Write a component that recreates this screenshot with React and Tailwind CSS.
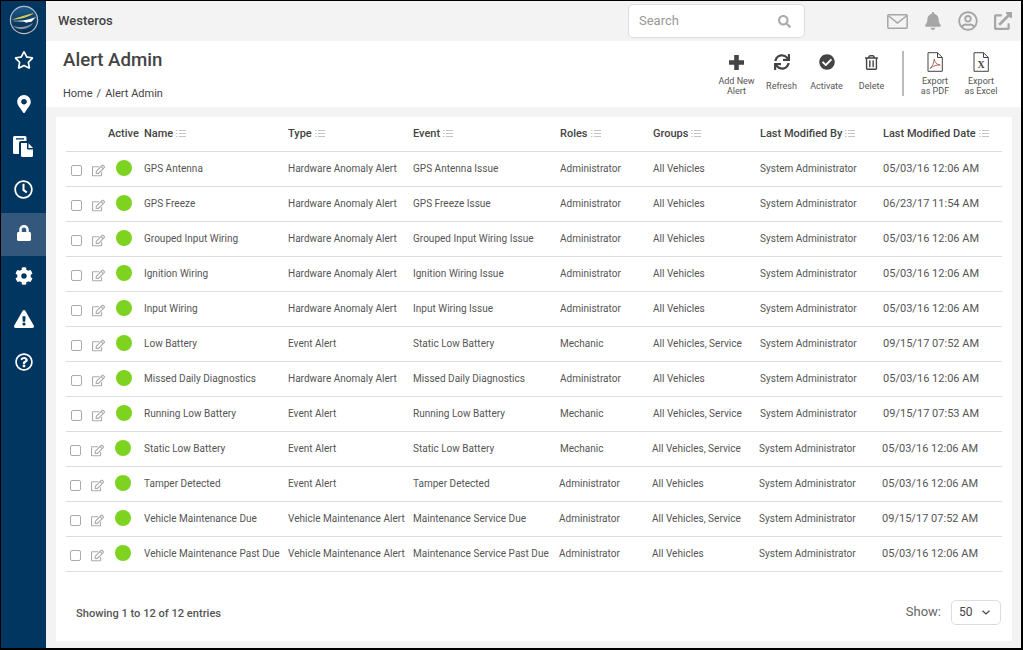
import { FaRegStar, FaMapMarkerAlt, FaRegClock, FaLock, FaCog, FaExclamationTriangle, FaRegQuestionCircle, FaSync, FaCheckCircle, FaRegTrashAlt, FaBell, FaRegUserCircle, FaExternalLinkAlt, FaRegEdit, FaSearch } from "react-icons/fa";

const rows = [
  ["GPS Antenna", "Hardware Anomaly Alert", "GPS Antenna Issue", "Administrator", "All Vehicles", "05/03/16 12:06 AM"],
  ["GPS Freeze", "Hardware Anomaly Alert", "GPS Freeze Issue", "Administrator", "All Vehicles", "06/23/17 11:54 AM"],
  ["Grouped Input Wiring", "Hardware Anomaly Alert", "Grouped Input Wiring Issue", "Administrator", "All Vehicles", "05/03/16 12:06 AM"],
  ["Ignition Wiring", "Hardware Anomaly Alert", "Ignition Wiring Issue", "Administrator", "All Vehicles", "05/03/16 12:06 AM"],
  ["Input Wiring", "Hardware Anomaly Alert", "Input Wiring Issue", "Administrator", "All Vehicles", "05/03/16 12:06 AM"],
  ["Low Battery", "Event Alert", "Static Low Battery", "Mechanic", "All Vehicles, Service", "09/15/17 07:52 AM"],
  ["Missed Daily Diagnostics", "Hardware Anomaly Alert", "Missed Daily Diagnostics", "Administrator", "All Vehicles", "05/03/16 12:06 AM"],
  ["Running Low Battery", "Event Alert", "Running Low Battery", "Mechanic", "All Vehicles, Service", "09/15/17 07:53 AM"],
  ["Static Low Battery", "Event Alert", "Static Low Battery", "Mechanic", "All Vehicles, Service", "05/03/16 12:06 AM"],
  ["Tamper Detected", "Event Alert", "Tamper Detected", "Administrator", "All Vehicles", "05/03/16 12:06 AM"],
  ["Vehicle Maintenance Due", "Vehicle Maintenance Alert", "Maintenance Service Due", "Administrator", "All Vehicles, Service", "09/15/17 07:52 AM"],
  ["Vehicle Maintenance Past Due", "Vehicle Maintenance Alert", "Maintenance Service Past Due", "Administrator", "All Vehicles", "05/03/16 12:06 AM"],
];

const columns = [
  ["Name", "w-[144px]"],
  ["Type", "w-[125px]"],
  ["Event", "w-[146px]"],
  ["Roles", "w-[93px] pl-px"],
  ["Groups", "w-[107px] pl-px"],
  ["Last Modified By", "w-[123px] pl-px"],
  ["Last Modified Date", "w-[120px] pl-px"],
];

function Logo() {
  return (
    <svg width="30" height="30" viewBox="0 0 30 30">
      <defs>
        <linearGradient id="sky" x1="0" y1="0" x2="0" y2="1">
          <stop offset="0" stopColor="#1d5c8c" />
          <stop offset="0.5" stopColor="#0f3f68" />
          <stop offset="1" stopColor="#0a2c4c" />
        </linearGradient>
      </defs>
      <circle cx="15" cy="15" r="13.6" fill="url(#sky)" stroke="#b4bfc8" strokeWidth="1.2" />
      <path d="M2 15 C9 12 17 10 25 8 C20 12 12 14 2 15Z" fill="#d9c95a" />
      <path d="M3 16 C11 16 17 15 21 14 L27 12 C25 14 24 15 22 17 C19 17 18 17 17 18 C17 16 12 17 3 16Z" fill="#ffffff" />
      <path d="M4 21 C11 23 18 22 24 18 C20 25 9 26 4 21Z" fill="#7e97ab" />
    </svg>
  );
}

function FilesIcon() {
  return (
    <svg width="21" height="21" viewBox="0 0 21 21" fill="#ffffff">
      <path d="M0 1.500A1.500 1.500 0 0 1 1.500 0H12a1.500 1.500 0 0 1 1.500 1.500V5H8A2 2 0 0 0 6 7v11H1.500A1.500 1.500 0 0 1 0 16.500Z" />
      <path d="M3 2.200h8v1.300H3Z" fill="#003660" />
      <path d="M8 7h6v5.500a1 1 0 0 0 1 1h5V19.500A1.500 1.500 0 0 1 18.500 21h-9A1.500 1.500 0 0 1 8 19.500Z" />
      <path d="M15.500 7.200 20 12h-4.500Z" />
    </svg>
  );
}

function MailIcon() {
  return (
    <svg width="21" height="15" viewBox="0 0 21 15" fill="none" stroke="#a6a6a6" strokeWidth="1.500">
      <rect x="0.800" y="0.800" width="19.400" height="13.400" rx="1" />
      <path d="M1 1.500 10.500 9 20 1.500" />
    </svg>
  );
}

function PlusIcon() {
  return (
    <svg width="15" height="15" viewBox="0 0 15 15" fill="#444">
      <path d="M5.200 0h4.600v5.200H15v4.600H9.800V15H5.200V9.800H0V5.200h5.200Z" />
    </svg>
  );
}

function DocIcon({ label }) {
  return (
    <svg width="16" height="20" viewBox="0 0 16 20" fill="none">
      <path d="M1 .7h9.500L15.300 5.500V19.300H1Z" stroke="#444" strokeWidth="1" />
      <path d="M10.500.7V5.500h4.800" stroke="#444" strokeWidth="1" />
      {label === "pdf" ? (
        <path d="M3 16.500C5 15 7 11 7.200 7c.6 3.500 2.500 5.500 6 6-3-.3-7 .7-10.200 3.500Z" stroke="#a85a50" strokeWidth="0.9" />
      ) : (
        <text x="8" y="16" textAnchor="middle" fontSize="10" fontWeight="700" fontFamily="Liberation Serif, serif" fill="#444">X</text>
      )}
    </svg>
  );
}

function ToolButton({ icon, lines, width }) {
  return (
    <div className={`flex flex-col items-center ${width}`}>
      <div className="h-[22px] flex items-center justify-center text-[#444]">{icon}</div>
      <div className="h-[24px] mt-[1px] flex items-center justify-center text-center text-[9px] leading-[10px] text-[#555]">
        {lines}
      </div>
    </div>
  );
}

function SortIcon() {
  return (
    <svg width="10" height="8" viewBox="0 0 10 8" className="inline-block ml-[3px]" stroke="#c4c4c4" strokeWidth="1">
      <path d="M0 .5h1.500M3 .5h7M0 3.500h1.500M3 3.500h7M0 6.500h1.500M3 6.500h7" />
    </svg>
  );
}

const navItems = [
  <FaRegStar size={20} className="-mt-px" />,
  <FaMapMarkerAlt size={18} />,
  <FilesIcon />,
  <FaRegClock size={19} />,
  <FaLock size={16} />,
  <FaCog size={18} />,
  <FaExclamationTriangle size={20} />,
  <FaRegQuestionCircle size={18} />,
];

export default function App() {
  return (
    <div className="w-[1023px] h-[650px] border-t border-l border-r-2 border-b-2 border-black flex overflow-hidden bg-[#f3f3f3] font-['Roboto',sans-serif] text-[#555]">
      <aside className="w-[45px] shrink-0 bg-[#003660] text-white">
        <div className="h-[40px] pb-[2px] flex items-center justify-center"><Logo /></div>
        {navItems.map((icon, i) => (
          <div key={i} className={`h-[43px] pb-[4px] flex items-center justify-center ${i === 4 ? "bg-[#33587b]" : ""}`}>
            {icon}
          </div>
        ))}
      </aside>

      <div className="flex-1 min-w-0 flex flex-col">
        <header className="h-[40px] shrink-0 flex items-center pl-[12px] pr-[9px] bg-[#f3f3f3]">
          <div className="text-[13px] font-medium text-[#444]">Westeros</div>
          <div className="ml-auto w-[177px] h-[34px] bg-white border border-[#ddd] rounded-[5px] flex items-center justify-between pl-[10px] pr-[13px] text-[13px] text-[#999]">
            <span>Search</span>
            <FaSearch size={13} className="text-[#aaa]" />
          </div>
          <div className="flex items-center text-[#a6a6a6] ml-[82px] gap-[16px]">
            <MailIcon />
            <FaBell size={18} />
            <FaRegUserCircle size={20} />
            <FaExternalLinkAlt size={18} />
          </div>
        </header>

        <div className="h-[66px] shrink-0 bg-white flex pl-[17px]">
          <div>
            <h1 className="text-[18.7px] leading-[24px] mt-[7px] font-medium text-[#444]">Alert Admin</h1>
            <div className="mt-[15px] flex gap-[4px] text-[11px] leading-[14px] text-[#444]">
              <span>Home</span>
              <span>/</span>
              <span>Alert Admin</span>
            </div>
          </div>
          <div className="ml-auto flex items-start pt-[10px] pr-[17px]">
            <ToolButton width="w-[45px]" icon={<PlusIcon />} lines={<span>Add New<br />Alert</span>} />
            <ToolButton width="w-[45px]" icon={<FaSync size={16} />} lines="Refresh" />
            <ToolButton width="w-[45px]" icon={<FaCheckCircle size={16} />} lines="Activate" />
            <ToolButton width="w-[45px]" icon={<FaRegTrashAlt size={15} />} lines="Delete" />
            <div className="w-[2px] h-[45px] bg-[#bbb] ml-[8px] mr-[8px]" />
            <ToolButton width="w-[46px]" icon={<DocIcon label="pdf" />} lines={<span>Export<br />as PDF</span>} />
            <ToolButton width="w-[46px]" icon={<DocIcon label="xls" />} lines={<span>Export<br />as Excel</span>} />
          </div>
        </div>

        <main className="flex-1 min-h-0 pt-[10px] pl-[10px] pr-[9px] pb-[7px]">
          <div className="h-full bg-white px-[10px]">
            <table className="w-[936px] table-fixed border-collapse">
              <thead>
                <tr className="h-[34px] border-b border-[#ddd] text-[11px] font-medium text-[#444]">
                  <th className="w-[42px] p-0" />
                  <th className="w-[36px] p-0 text-left font-medium">Active</th>
                  {columns.map(([name, width]) => (
                    <th key={name} className={`${width} pr-0 py-0 text-left font-medium whitespace-nowrap`}>
                      {name}<SortIcon />
                    </th>
                  ))}
                </tr>
              </thead>
              <tbody>
                {rows.map((row, i) => {
                  const lowRow = i >= 8;
                  const lastRows = i >= 9;
                  return (
                    <tr key={row[0]} className="h-[35px] border-b border-[#ddd] text-[10px] tracking-[0.02px] text-[#555]">
                      <td className="p-0">
                        <div className={`flex items-center pt-[3px] ${lowRow ? "pl-[4px]" : "pl-[5px]"}`}>
                          <span className="w-[11px] h-[11px] border border-[#aaa] rounded-[2px] bg-white" />
                          <FaRegEdit size={13} className="ml-[10px] text-[#aaa]" />
                        </div>
                      </td>
                      <td className="p-0">
                        <div className={`w-[16px] h-[16px] rounded-full bg-[#7ed321] -mt-[2px] ${lowRow ? "ml-[7px]" : "ml-[8px]"}`} />
                      </td>
                      <td className="p-0 whitespace-nowrap">{row[0]}</td>
                      <td className="p-0 whitespace-nowrap">{row[1]}</td>
                      <td className="p-0 whitespace-nowrap">{row[2]}</td>
                      <td className={`py-0 pr-0 whitespace-nowrap ${lastRows ? "pl-0" : "pl-px"}`}>{row[3]}</td>
                      <td className={`py-0 pr-0 whitespace-nowrap ${lowRow ? "pl-0" : "pl-px"}`}>{row[4]}</td>
                      <td className={`py-0 pr-0 whitespace-nowrap ${lowRow ? "pl-0" : "pl-px"}`}>System Administrator</td>
                      <td className={`pb-0 pt-px pr-0 whitespace-nowrap text-[11px] ${lowRow ? "pl-0" : "pl-px"}`}>{row[5]}</td>
                    </tr>
                  );
                })}
              </tbody>
            </table>

            <div className="flex items-center justify-between mt-[28px] pl-[10px]">
              <div className="text-[11.100px] font-medium text-[#555] pt-[4px]">Showing 1 to 12 of 12 entries</div>
              <div className="flex items-center mr-px">
                <span className="text-[13px] text-[#666] mr-[10px]">Show:</span>
                <div className="w-[50px] h-[25px] border border-[#ddd] rounded-[5px] flex items-center justify-between pl-[7px] pr-[10px] text-[12px] text-[#444]">
                  50
                  <svg width="8" height="5" viewBox="0 0 8 5" fill="none" stroke="#444" strokeWidth="1.200">
                    <path d="M.5.7 4 4 7.500.7" />
                  </svg>
                </div>
              </div>
            </div>
          </div>
        </main>
      </div>
    </div>
  );
}
